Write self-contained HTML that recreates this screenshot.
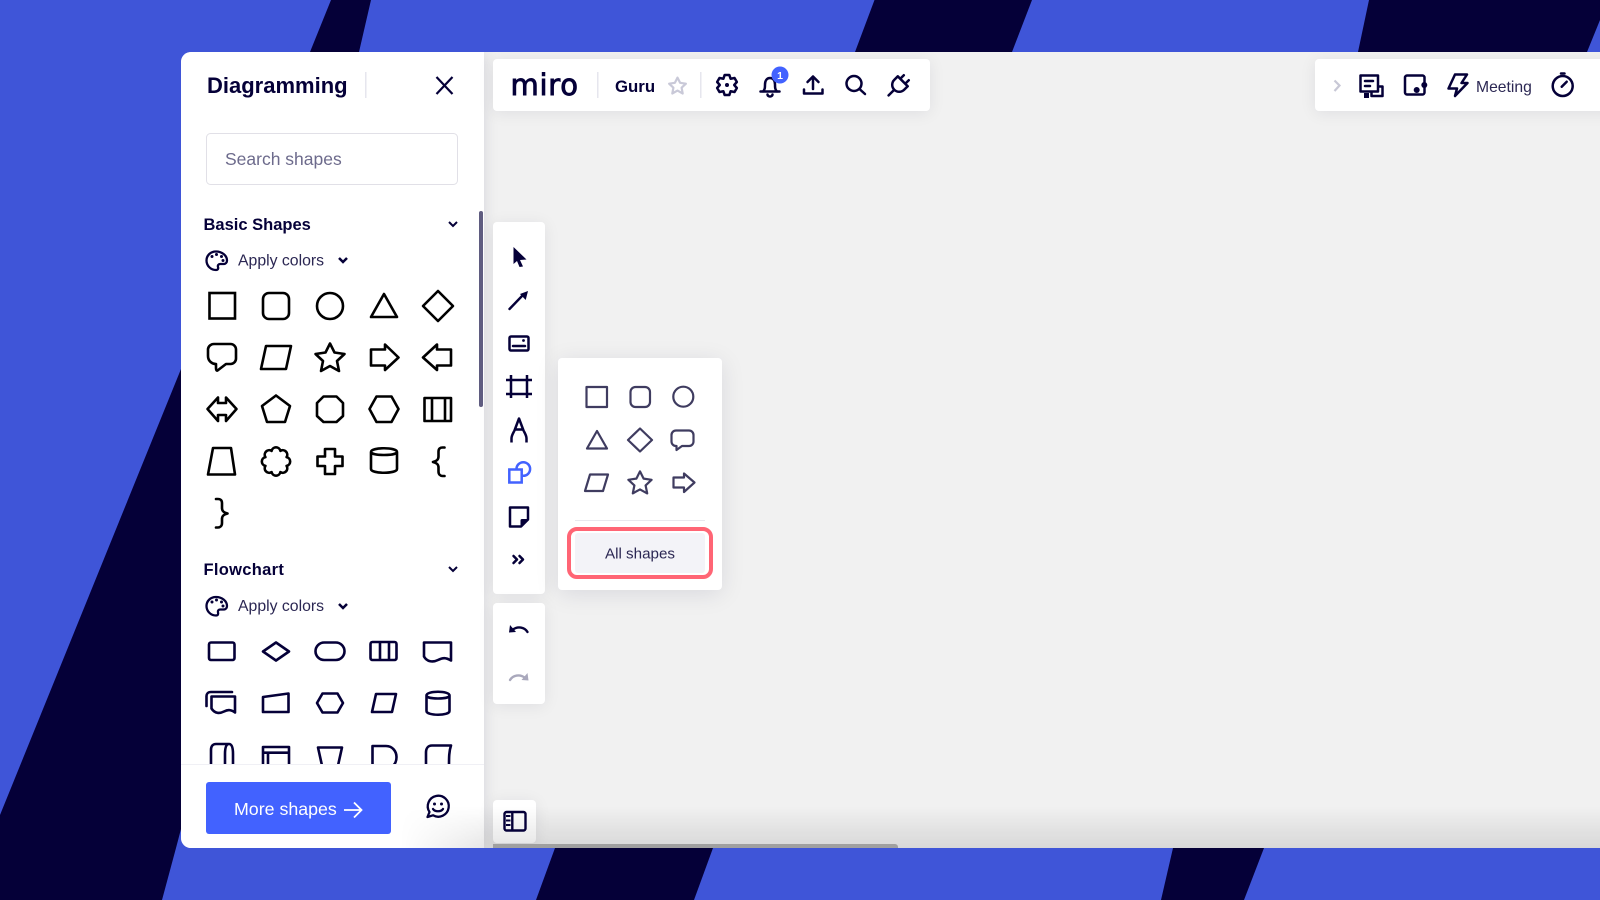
<!DOCTYPE html>
<html><head><meta charset="utf-8"><title>Miro Diagramming</title>
<style>
html,body{margin:0;padding:0;width:1600px;height:900px;overflow:hidden;background:#3f55d8}
svg{position:absolute;left:0;top:0}
text{font-family:"Liberation Sans",sans-serif;fill:#050038}
.wrap{position:absolute;left:181px;top:52px;width:1419px;height:796px;overflow:hidden;border-radius:10px 0 0 10px;background:#f1f1f1}
.p{position:absolute;background:#fff;border-radius:4px;box-shadow:0 2px 16px rgba(5,0,56,.08)}
.fade{position:absolute;left:400px;top:806px;width:1200px;height:42px;background:linear-gradient(to bottom,rgba(0,0,0,0),rgba(0,0,0,.1));-webkit-mask-image:linear-gradient(to right,transparent,#000 90px);mask-image:linear-gradient(to right,transparent,#000 90px)}
</style></head>
<body>
<svg width="1600" height="900" viewBox="0 0 1600 900">
<rect width="1600" height="900" fill="#3f55d8"/>
<g fill="#050038">
<polygon points="331,0 371,0 359,52 310,52"/>
<polygon points="874.5,0 1032,0 1012,52 855,52"/>
<polygon points="1369,0 1600,0 1600,20 1587,52 1358,52"/>
<polygon points="0,815 181,369 181,829 176,848 162,900 0,900"/>
<polygon points="555,848 713,848 694,900 536,900"/>
<polygon points="1173,848 1264,848 1244,900 1161,900"/>
</g>
</svg>
<div class="wrap">
<div class="p" style="left:0;top:0;width:303px;height:796px;border-radius:0;box-shadow:0 0 14px rgba(5,0,56,.12)"></div>
<div class="p" style="left:312px;top:7px;width:437px;height:52px"></div>
<div class="p" style="left:1134px;top:7px;width:300px;height:52px"></div>
<div class="p" style="left:312px;top:170px;width:52px;height:372px"></div>
<div class="p" style="left:377px;top:306px;width:164px;height:232px;box-shadow:0 4px 24px rgba(5,0,56,.1)"></div>
<div class="p" style="left:312px;top:551px;width:52px;height:101px"></div>
<div class="p" style="left:312px;top:748px;width:43px;height:43px"></div>
</div>
<div class="fade"></div>
<svg width="1600" height="900" viewBox="0 0 1600 900">
<defs><clipPath id="c"><rect x="181" y="600" width="303" height="164"/></clipPath></defs>

<!-- bottom scrollbar -->
<path d="M493 848v-4h402a3 3 0 0 1 3 3v1z" fill="#a0a0a0"/>

<!-- panel header -->
<text x="207" y="93" font-size="22" font-weight="700">Diagramming</text>
<rect x="365" y="72" width="1.5" height="26" fill="#e6e6ee"/>
<path d="M436.5 77L452.5 94M452.5 77L436.5 94" stroke="#050038" stroke-width="2.2" fill="none"/>
<rect x="206.5" y="133.5" width="251" height="51" rx="4" fill="#fff" stroke="#e1e0e7"/>
<text x="225" y="165" font-size="17.5" style="fill:#6d6b8c">Search shapes</text>

<!-- scrollbar -->
<rect x="479" y="211" width="4" height="196" rx="2" fill="#5f5c80"/>

<!-- Basic shapes header -->
<text x="203.500" y="230" font-size="16.500" font-weight="700">Basic Shapes</text>
<polyline points="449,222 453,226 457,222" fill="none" stroke="#050038" stroke-width="2"/>
<g fill="none" stroke="#050038" stroke-width="2.300">
<path d="M216 251.500c-5.500 0-9.500 4-9.500 9 0 5 4 9.500 9.500 9.500 2 0 2.500-1.500 2-3-.5-1.500.5-3 2-3h3.500c2 0 3.500-1.500 3.500-3.500 0-5-5-9-11-9z"/>
<g fill="#050038" stroke="none"><circle cx="212" cy="256.500" r="1.500"/><circle cx="216.500" cy="254.500" r="1.500"/><circle cx="221.500" cy="256.500" r="1.500"/><circle cx="223" cy="260.500" r="1.500"/></g>
</g>
<text x="238" y="265.500" font-size="15.800" style="fill:#2b2753">Apply colors</text>
<polyline points="339,258 343,262 347,258" fill="none" stroke="#050038" stroke-width="2.500"/>

<!-- Basic shapes -->
<g fill="none" stroke="#000" stroke-width="2.600" stroke-linejoin="round" stroke-linecap="round">
<rect x="209.500" y="293" width="25.500" height="25.500" stroke-linejoin="miter"/>
<rect x="263" y="293" width="26" height="26" rx="6"/>
<circle cx="330" cy="306" r="13"/>
<polygon points="384,294 397,317 371,317"/>
<polygon points="438,291 453,306 438,321 423,306"/>

<path d="M214 344h16.500a5.500 5.500 0 0 1 5.500 5.500v9a5.500 5.500 0 0 1-5.500 5.500H226l-8.500 6.500c-1 .5-1.500-1-1.500-2.500v-4c-4 0-8-3-8-8v-7A6 6 0 0 1 214 344z"/>
<polygon points="266,346 291,346 286,369 261,369"/>
<polygon points="330,343.500 334.500,352.500 344.500,354 337,361 339,371 330,366 321,371 323,361 315.500,354 325.500,352.500"/>
<path d="M371 349.500H385V344.500L398.500 357.500L385 370V365.500H371Z"/>
<path d="M451 349.500H437V344.500L423 357.500L437 370V365.500H451Z"/>

<polygon points="207.500,409 218,397.500 218,403 226,403 226,397.500 236.500,409 226,421 226,415 218,415 218,421"/>
<polygon points="276,395.500 290,406 285,422 267,422 262,406"/>
<polygon points="323.500,396.500 336.500,396.500 343,403 343,416 336.500,422 323.500,422 317,416 317,403"/>
<polygon points="376.500,396.500 391.500,396.500 398.500,409 391.500,422 376.500,422 369.500,409"/>
<path d="M424.500 398H451V421H424.500ZM432 398V421M445 398V421"/>

<polygon points="213,448 231,448 235,474.500 208,474.500"/>
<path d="M271.600 450.900A4.500 4.500 0 0 1 280.400 450.900A4.500 4.500 0 0 1 286.600 457.100A4.500 4.500 0 0 1 286.600 465.900A4.500 4.500 0 0 1 280.400 472.100A4.500 4.500 0 0 1 271.600 472.100A4.500 4.500 0 0 1 265.400 465.900A4.500 4.500 0 0 1 265.400 457.100A4.500 4.500 0 0 1 271.600 450.900Z"/>
<path d="M325 449H335V456.500H342.500V466H335V474H325V466H317.500V456.500H325Z"/>
<path d="M371 452c0-5 26-5 26 0v17c0 5-26 5-26 0ZM371 452c0 4 26 4 26 0"/>
<path d="M444.500 447.500h-2c-2 0-4 1-4 4v5c0 3-1.500 4.500-5.500 5.500 4 1 5.500 2.500 5.500 5.500v4c0 3 2 4.500 4 4.500h2"/>
<path d="M216 499h2c2 0 4 1 4 4v5c0 3 1.500 4.500 5.500 5.500-4 1-5.500 2.500-5.500 5.500v4c0 3-2 4.500-4 4.500h-2"/>
</g>

<!-- Flowchart header -->
<text x="203.500" y="575" font-size="16.500" font-weight="700" letter-spacing=".3">Flowchart</text>
<polyline points="449,567 453,571 457,567" fill="none" stroke="#050038" stroke-width="2"/>
<g transform="translate(0,345.500)" fill="none" stroke="#050038" stroke-width="2.300">
<path d="M216 251.500c-5.500 0-9.500 4-9.500 9 0 5 4 9.500 9.500 9.500 2 0 2.500-1.500 2-3-.5-1.500.5-3 2-3h3.500c2 0 3.500-1.500 3.500-3.500 0-5-5-9-11-9z"/>
<g fill="#050038" stroke="none"><circle cx="212" cy="256.500" r="1.500"/><circle cx="216.500" cy="254.500" r="1.500"/><circle cx="221.500" cy="256.500" r="1.500"/><circle cx="223" cy="260.500" r="1.500"/></g>
</g>
<text x="238" y="611" font-size="15.800" style="fill:#2b2753">Apply colors</text>
<polyline points="339,604 343,608 347,604" fill="none" stroke="#050038" stroke-width="2.500"/>

<!-- Flowchart shapes -->
<g clip-path="url(#c)" fill="none" stroke="#050038" stroke-width="2.600" stroke-linejoin="round" stroke-linecap="round">
<rect x="209" y="642.500" width="25.500" height="17.500" rx="2"/>
<polygon points="276,642.500 289,651.500 276,660.500 263,651.500"/>
<rect x="315.500" y="642.500" width="29" height="17.500" rx="8.750"/>
<path d="M372.500 642H394.500a2 2 0 0 1 2 2V658a2 2 0 0 1-2 2H372.500a2 2 0 0 1-2-2V644a2 2 0 0 1 2-2ZM380 642V660M389 642V660"/>
<path d="M424 642.500h27v18c-5-3-8-3-13-.5-5 2.500-11 2-14-3.500Z"/>

<path d="M211.500 696.500H235v16c-4-3-7-3-11-1s-9 2.500-12.500-3ZM232 692H211c-3 0-4.500 2-4.500 4v10"/>
<path d="M263 697L288.500 693.500V712H263Z"/>
<polygon points="322.500,693.500 337.500,693.500 343,703 337.500,712.500 322.500,712.500 317,703"/>
<polygon points="376,694 396,694 392,712 372,712"/>
<path d="M426.500 695.500c0-5 23-5 23 0v15.500c0 5-23 5-23 0ZM426.500 695.500c0 4 23 4 23 0"/>

<path d="M211 770V750c0-4 2-6 5-6H229c3 0 4 4 4 10V770M229 744c-3 0-4 4-4 10v16"/>
<path d="M263 747H289V771H263ZM263 752.700H289M268 752.700V771"/>
<path d="M318 747.500H342L337 770H323Z"/>
<path d="M372.500 746H386c7 0 10.500 6 10.500 11 0 6-3 10-9 11M372.500 746V770"/>
<path d="M451 745.500H432c-4 0-6 3-6 7V770M451 745.500c-2 6-2 12-2 20"/>
</g>

<!-- Footer -->
<rect x="181" y="764" width="303" height="1" fill="#f0f0f5"/>
<rect x="206" y="782" width="185" height="52" rx="3" fill="#4262ff"/>
<text x="234" y="815" font-size="17.800" style="fill:#fff">More shapes</text>
<path d="M344 810H361M354 802.500L361.500 810L354 817.500" fill="none" stroke="#fff" stroke-width="1.800"/>
<g fill="none" stroke="#050038" stroke-width="2.300" stroke-linejoin="round" stroke-linecap="round">
<path d="M427.500 817L429.500 812A10.500 10.500 0 1 1 433 815.300Z"/>
<path d="M433 809c2 3 8 3 10 0"/>
</g>
<circle cx="434.500" cy="804" r="1.500" fill="#050038"/><circle cx="441.500" cy="804" r="1.500" fill="#050038"/>

<!-- Top toolbar -->
<text x="510.500" y="95" font-size="29" letter-spacing=".7" stroke="#050038" stroke-width=".9" style="font-family:'DejaVu Sans',sans-serif">miro</text>
<rect x="597" y="72" width="1.500" height="26" fill="#e6e6ee"/>
<rect x="700" y="72" width="1.500" height="26" fill="#e6e6ee"/>
<text x="615" y="92" font-size="16.800" font-weight="700">Guru</text>
<polygon transform="translate(677.500,86)" points="0,-8.400 2.600,-3.200 8.400,-2.300 4.100,1.700 5.200,7.500 0,4.600 -5.200,7.500 -4.100,1.700 -8.400,-2.300 -2.600,-3.200" fill="none" stroke="#c9c9d8" stroke-width="2.200" stroke-linejoin="round"/>
<g fill="none" stroke="#050038" stroke-width="2.500" stroke-linejoin="round" stroke-linecap="round">
<polygon transform="translate(727,85)" points="-2.320,-10.040 2.320,-10.040 3.600,-6.240 7.530,-7.020 9.850,-3.010 7.200,0 9.850,3.010 7.530,7.020 3.600,6.240 2.320,10.040 -2.320,10.040 -3.600,6.240 -7.530,7.020 -9.850,3.010 -7.200,0 -9.850,-3.010 -7.530,-7.020 -3.600,-6.240"/>
<path d="M760.500 91.500h19M763 91.500c2-2 2-4 2-7 0-4 2-6.500 5-6.500s5 2.500 5 6.500c0 3 0 5 2 7M767.500 94.500a2.500 2 0 0 0 5 0"/>
<path d="M804 89.500v4h18.500v-4M813 89V77M807.500 82L813 76.500L818.500 82"/>
<circle cx="854" cy="83.500" r="7.500"/><path d="M859.500 89L865 94"/>
<g transform="translate(898.500,85.500) rotate(45)">
<path d="M-3.500 -11V-6M3.500 -11V-6M-7 -6H7V-1A7 7 0 0 1 -7 -1ZM0 6V14"/>
</g>
</g>
<circle cx="727" cy="85" r="2" fill="#050038"/>
<circle cx="780" cy="75" r="8.500" fill="#4262ff"/>
<text x="780" y="79" font-size="10.500" font-weight="700" text-anchor="middle" style="fill:#fff">1</text>

<!-- Right toolbar -->
<polyline points="1334.500,80.500 1339.500,85.500 1334.500,91" fill="none" stroke="#c8c8d6" stroke-width="2.200"/>
<g fill="none" stroke="#050038" stroke-width="2.500" stroke-linejoin="round" stroke-linecap="round">
<path d="M1360.500 75.500H1378V91.500H1360.500ZM1365 81H1373M1365 86H1370M1378 86.500H1382.500V96H1371.500V91.500"/>
<rect x="1405" y="75.500" width="19.500" height="19" rx="2"/>
<path d="M1455 74.500h12l-5.500 8.500h6L1455 96l2-7.500h-8.500Z"/>
<circle cx="1562.700" cy="86" r="10"/><path d="M1561 73.500h3.500M1561.700 86.700L1566.700 81.700"/>
</g>
<rect x="1364" y="93" width="5" height="5" fill="#050038"/>
<circle cx="1416.700" cy="90" r="3" fill="#050038"/><circle cx="1424.300" cy="85" r="3" fill="#050038"/>
<text x="1476" y="92" font-size="15.700" style="fill:#2b2753">Meeting</text>

<!-- Left toolbar -->
<path d="M513.500 247L526.500 259.500L520 260L523 266.500L519.500 267L517 261L513.500 264Z" fill="#050038"/>
<path d="M509.500 309L522 296" stroke="#050038" stroke-width="2.400" stroke-linecap="round"/>
<polygon points="528,291 520,294 525.700,300" fill="#050038"/>
<g fill="none" stroke="#050038" stroke-width="2.500" stroke-linejoin="round" stroke-linecap="round">
<rect x="509.500" y="336.500" width="19" height="14" rx="1.500"/>
<path d="M513 346H525"/>
<path d="M511 375V398M527 375V398M506 380H532M506 394H532" stroke-linecap="butt"/>
<path d="M511.500 442.500v-4c0-3 1.500-5 3-8L519 418.500l4.500 12c1.500 3 3 5 3 8v4M515 429.500H523" stroke-linecap="butt"/>
<circle cx="523.300" cy="469" r="6.800" stroke="#4262ff"/>
<rect x="509.300" y="469.500" width="12.400" height="13" fill="#fff" stroke="#4262ff" stroke-linejoin="miter"/>
<path d="M510 507.500h18v12l-7 7h-11Z"/>
<path d="M513.500 556L517 559.500L513.500 563M519.500 556L523 559.500L519.500 563"/>
</g>
<circle cx="523.500" cy="340.500" r="1.400" fill="#050038"/>
<path d="M528 519l-7.500 7.500v-6a1.500 1.500 0 0 1 1.500-1.500Z" fill="#050038"/>

<!-- Popup -->
<g fill="none" stroke="#3f3c60" stroke-width="2.200" stroke-linejoin="round" stroke-linecap="round">
<rect x="586.500" y="387" width="20.500" height="20"/>
<rect x="630.500" y="387" width="19.500" height="20" rx="5"/>
<circle cx="683.300" cy="396.700" r="10"/>
<polygon points="597,431 607,448.500 587,448.500"/>
<polygon points="640,428.500 652,440 640,451.500 628,440"/>
<path d="M676 430.500h13a4.500 4.500 0 0 1 4.500 4.500v6.500a4.500 4.500 0 0 1-4.500 4.500h-7l-5.500 4v-4h-.5a4.500 4.500 0 0 1-4.500-4.500V435A4.500 4.500 0 0 1 676 430.500Z"/>
<polygon points="590,474.500 608,474.500 603,491 585,491"/>
<polygon transform="translate(640,483)" points="0,-11.600 3.600,-4.400 11.600,-3.200 5.600,2.400 7.200,10.400 0,6.400 -7.200,10.400 -5.600,2.400 -11.600,-3.200 -3.600,-4.400"/>
<path d="M673.500 477.500H684V473.500L694.500 482.500L684 492V487.500H673.500Z"/>
</g>
<rect x="575" y="520" width="130" height="1" fill="#e8e8ee"/>
<rect x="569" y="529" width="142" height="48" rx="8" fill="#fff" stroke="#ff6575" stroke-width="4"/>
<rect x="575" y="533" width="130" height="40" rx="3" fill="#f3f3f8"/>
<text x="640" y="558.500" font-size="15.200" text-anchor="middle" style="fill:#2b2753">All shapes</text>

<!-- Undo / redo -->
<path d="M527.500 632c-3-5-10-6-14.500-2.500" fill="none" stroke="#050038" stroke-width="2.400" stroke-linecap="round"/>
<polygon points="509,632.500 510,625 516,632" fill="#050038"/>
<path d="M510 680c3-5 10-6 14.500-2.500" fill="none" stroke="#a9a8bc" stroke-width="2.400" stroke-linecap="round"/>
<polygon points="528.500,680.500 527.500,673 521.500,680" fill="#a9a8bc"/>

<!-- panel toggle -->
<rect x="504.500" y="812" width="21" height="18.500" rx="2" fill="none" stroke="#050038" stroke-width="2.400"/>
<path d="M512.300 812V830.500" stroke="#050038" stroke-width="2.400"/>
<path d="M506 816H510.500M506 820.500H510.500M506 825H510.500" stroke="#050038" stroke-width="2"/>
</svg>
</body></html>
